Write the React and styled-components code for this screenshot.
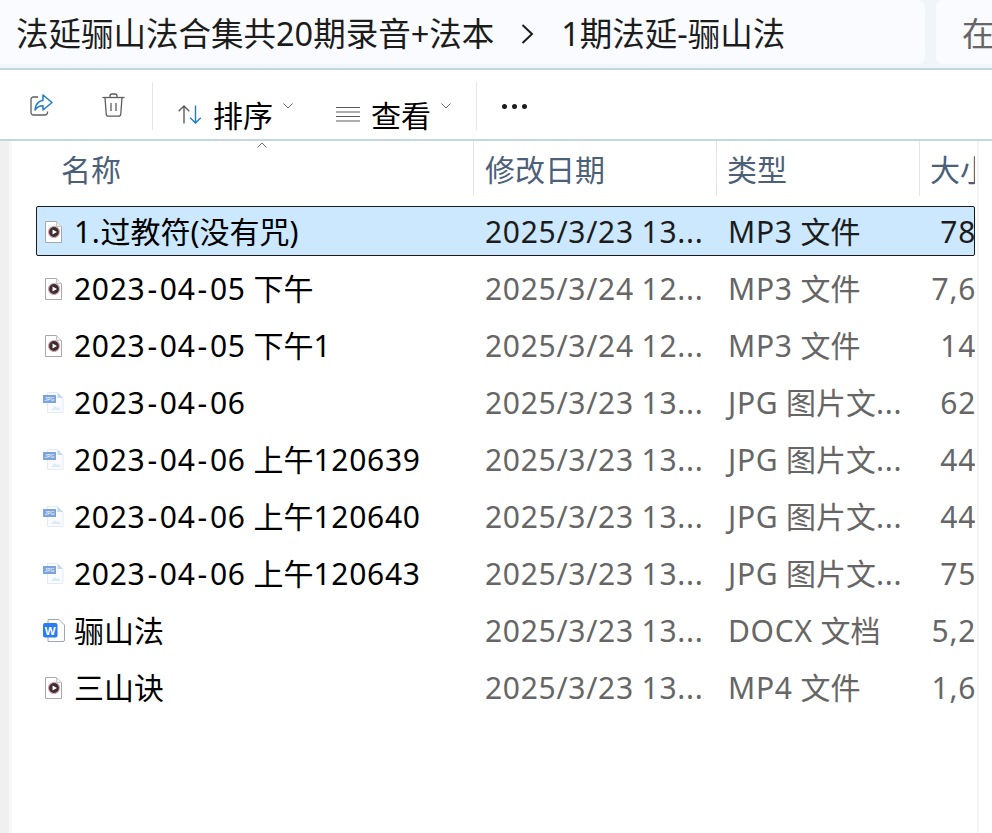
import React from "react"
import styled, { createGlobalStyle } from "styled-components"

const GlobalStyle = createGlobalStyle`
  html, body {
    margin: 0;
    background: #fff;
  }
  body {
    font-family: "Noto Sans", "Noto Sans CJK SC", sans-serif;
    overflow: hidden;
  }
`

const files = [
  { name: "1.过教符(没有咒)", date: "2025/3/23 13...", type: "MP3 文件", size: "78", icon: "media", selected: true },
  { name: "2023-04-05 下午", date: "2025/3/24 12...", type: "MP3 文件", size: "7,6", icon: "media" },
  { name: "2023-04-05 下午1", date: "2025/3/24 12...", type: "MP3 文件", size: "14", icon: "media" },
  { name: "2023-04-06", date: "2025/3/23 13...", type: "JPG 图片文...", size: "62", icon: "jpg" },
  { name: "2023-04-06 上午120639", date: "2025/3/23 13...", type: "JPG 图片文...", size: "44", icon: "jpg" },
  { name: "2023-04-06 上午120640", date: "2025/3/23 13...", type: "JPG 图片文...", size: "44", icon: "jpg" },
  { name: "2023-04-06 上午120643", date: "2025/3/23 13...", type: "JPG 图片文...", size: "75", icon: "jpg" },
  { name: "骊山法", date: "2025/3/23 13...", type: "DOCX 文档", size: "5,2", icon: "word" },
  { name: "三山诀", date: "2025/3/23 13...", type: "MP4 文件", size: "1,6", icon: "media" },
]

const MediaIcon = () => (
  <svg width="18" height="22" viewBox="0 0 18 22">
    <path d="M0.500 0.500h11l5 5v16h-16z" fill="#fff" stroke="#a8a8a8" />
    <path d="M11.500 0.500v5h5" fill="#efefef" stroke="#c4c4c4" />
    <circle cx="9" cy="11" r="5.500" fill="#3a2f2f" stroke="#d8a4b4" strokeWidth="1.200" />
    <path d="M7.500 8.500l4.500 2.500-4.500 2.500z" fill="#fff" />
  </svg>
)

const JpgIcon = () => (
  <svg width="21" height="21" viewBox="0 0 21 21">
    <path d="M4.500 0.500h10l5.500 5.500v14.500h-15.500z" fill="#f9fbff" stroke="#e2ebf7" />
    <path d="M14.500 0.500v5.500h5.500z" fill="#c6daf4" />
    <rect x="0" y="3" width="13" height="8" fill="#7ba3e0" />
    <text x="6.500" y="9" textAnchor="middle" fontFamily="Liberation Sans" fontSize="5" fill="#fff">JPG</text>
    <path d="M8 18l3.500-4 2.500 2 1.500-1 2.500 3z" fill="#dcebf8" />
  </svg>
)

const WordIcon = () => (
  <svg width="22" height="23" viewBox="0 0 22 23">
    <path d="M5 0.500h11l5.500 5.500v15a1.500 1.500 0 0 1-1.500 1.500H5z" fill="#fff" stroke="#9fa6b0" />
    <rect x="0" y="4" width="14.500" height="14.500" rx="2" fill="#2b7cf0" />
    <text x="7.200" y="15.500" textAnchor="middle" fontFamily="Liberation Sans" fontWeight="700" fontSize="11.500" fill="#fff">W</text>
  </svg>
)

const icons = { media: MediaIcon, jpg: JpgIcon, word: WordIcon }

const ShareIcon = () => (
  <svg width="23" height="22" viewBox="0 0 23 22" fill="none">
    <path d="M8 3H3.500A2.500 2.500 0 0 0 1 5.500V18.500A2.500 2.500 0 0 0 3.500 21H15A2.500 2.500 0 0 0 17.500 18.500V17.500" stroke="#5f5f5f" strokeWidth="1.300" />
    <path d="M13 1l9 7.500-9 7.500v-4.200c-3.500 0-6 1-8 4.200 .5-5.500 3.500-8.800 8-9.700z" fill="#fff" stroke="#1d7bc9" strokeWidth="1.500" strokeLinejoin="round" />
  </svg>
)

const TrashIcon = () => (
  <svg width="23" height="24" viewBox="0 0 23 24" fill="none" stroke="#5c5c5c" strokeWidth="1.300">
    <path d="M0.500 4.500h22" />
    <path d="M8 4.500V3a2 2 0 0 1 2-2h3a2 2 0 0 1 2 2v1.500" />
    <path d="M3 4.500l1.200 16.500a2.300 2.300 0 0 0 2.300 2.200h10a2.300 2.300 0 0 0 2.300-2.200L20 4.500" />
    <path d="M9 10v8M14 10v8" />
  </svg>
)

const SortIcon = () => (
  <svg width="24" height="19" viewBox="0 0 24 19" fill="none" strokeWidth="1.400">
    <path d="M6 18.500V1M0.700 6.300L6 1l5.300 5.300" stroke="#5c5c5c" />
    <path d="M17.500 0.500V18M12.200 12.700L17.500 18l5.300-5.300" stroke="#1d7bc9" />
  </svg>
)

const ViewIcon = () => (
  <svg width="24" height="16" viewBox="0 0 24 16" fill="none" stroke="#5c5c5c" strokeWidth="1.200">
    <path d="M0 1.500h24M0 6h24M0 10.500h24M0 15h24" />
  </svg>
)

const Caret = ({ up }) => (
  <svg width="10" height="6" viewBox="0 0 10 6" fill="none" stroke="#6a6a6a" strokeWidth="1">
    <path d={up ? "M0.500 5.500L5 1l4.500 4.500" : "M0.500 0.500L5 5l4.500-4.500"} />
  </svg>
)

// windows draws digits and dashes wider than the cjk font does
const Mixed = ({ text }) =>
  text.split(/([0-9A-Z/:,.\-]+)/).map((part, i) => {
    if (i % 2 === 0) return part
    return (
      <Latin key={i}>
        {part.split(/(-)/).map((bit, j) => (j % 2 ? <Dash key={j}>-</Dash> : bit))}
      </Latin>
    )
  })

const App = () => (
  <Page>
    <GlobalStyle />
    <AddressBar>
      <Breadcrumb>
        <Crumb>法延骊山法合集共20期录音+法本</Crumb>
        <Separator>
          <svg width="13" height="22" viewBox="0 0 13 22" fill="none" stroke="#1c1c1c" strokeWidth="2">
            <path d="M1.500 2l9.500 9-9.500 9" />
          </svg>
        </Separator>
        <Crumb>1期法延-骊山法</Crumb>
      </Breadcrumb>
      <SearchBox>在</SearchBox>
    </AddressBar>
    <Toolbar>
      <IconButton $pad={6}><ShareIcon /></IconButton>
      <IconButton $pad={0} $shift={-2}><TrashIcon /></IconButton>
      <ToolDivider />
      <MenuButton $width={158}>
        <MenuIcon><SortIcon /></MenuIcon>
        <MenuLabel>排序</MenuLabel>
        <MenuCaret><Caret /></MenuCaret>
      </MenuButton>
      <MenuButton $width={165}>
        <MenuIcon><ViewIcon /></MenuIcon>
        <MenuLabel>查看</MenuLabel>
        <MenuCaret><Caret /></MenuCaret>
      </MenuButton>
      <ToolDivider />
      <MoreButton>
        <Dot /><Dot /><Dot />
      </MoreButton>
    </Toolbar>
    <Content>
      <Gutter />
      <ListPane>
        <HeaderRow>
          <HeaderCell $pad={49} $divider>
            名称
            <SortMark><Caret up /></SortMark>
          </HeaderCell>
          <HeaderCell $pad={11} $divider>修改日期</HeaderCell>
          <HeaderCell $pad={10} $divider>类型</HeaderCell>
          <HeaderCell $pad={10}>大小</HeaderCell>
        </HeaderRow>
        <Rows>
          {files.map((file) => {
            const Icon = icons[file.icon]
            return (
              <Row key={file.name} $selected={file.selected}>
                <NameCell>
                  <IconSlot $kind={file.icon}><Icon /></IconSlot>
                  <span><Mixed text={file.name} /></span>
                </NameCell>
                <DateCell $selected={file.selected}><Mixed text={file.date} /></DateCell>
                <TypeCell $selected={file.selected}><Mixed text={file.type} /></TypeCell>
                <SizeCell $selected={file.selected}><Mixed text={file.size} /></SizeCell>
              </Row>
            )
          })}
        </Rows>
      </ListPane>
    </Content>
  </Page>
)

const Page = styled.div`
  width: 992px;
  height: 833px;
  display: flex;
  flex-direction: column;
  overflow: hidden;
  color: #000;
`

const AddressBar = styled.div`
  height: 68px;
  flex: none;
  display: flex;
  gap: 11px;
  background: #eff5f9;
  border-bottom: 2px solid #c6d6dd;
`

const Breadcrumb = styled.div`
  width: 925px;
  height: 64px;
  flex: none;
  display: flex;
  align-items: center;
  padding: 4px 0 0 16px;
  box-sizing: border-box;
  background: #f9fbfe;
  border-radius: 0 6px 6px 0;
`

const Crumb = styled.span`
  font-size: 32.5px;
  line-height: 60px;
  color: #1c1c1c;
  white-space: nowrap;
`

const Separator = styled.span`
  width: 67px;
  display: flex;
  justify-content: center;
`

const SearchBox = styled.div`
  flex: 1;
  height: 64px;
  display: flex;
  align-items: center;
  padding: 4px 0 0 26px;
  box-sizing: border-box;
  background: #f9fbfe;
  border-radius: 6px 0 0 6px;
  font-size: 32.5px;
  line-height: 60px;
  color: #666;
`

const Toolbar = styled.div`
  height: 69px;
  flex: none;
  display: flex;
  align-items: center;
  background: #fff;
  border-bottom: 2px solid #c6d6dd;
`

const IconButton = styled.div`
  width: 76px;
  height: 69px;
  padding-left: ${(p) => p.$pad}px;
  padding-right: ${(p) => (p.$shift ? -p.$shift : 0)}px;
  display: flex;
  align-items: center;
  justify-content: center;
  box-sizing: border-box;
`

const ToolDivider = styled.div`
  width: 1px;
  height: 48px;
  margin-top: 2px;
  background: #e6e6e6;
`

const MenuButton = styled.div`
  width: ${(p) => p.$width}px;
  height: 69px;
  display: flex;
  align-items: center;
  padding-left: 25px;
  box-sizing: border-box;
`

const MenuIcon = styled.span`
  display: flex;
  margin-top: 19px;
`

const MenuLabel = styled.span`
  font-size: 30px;
  margin: 22px 0 0 11px;
  line-height: 40px;
`

const MenuCaret = styled.span`
  display: flex;
  align-self: flex-start;
  margin: 33px 0 0 10px;
`

const MoreButton = styled.div`
  display: flex;
  gap: 5px;
  margin: 3px 0 0 25px;
`

const Dot = styled.i`
  display: block;
  width: 5px;
  height: 5px;
  border-radius: 50%;
  background: #1c1c1c;
`

const Content = styled.div`
  flex: 1;
  display: flex;
  min-height: 0;
`

const Gutter = styled.div`
  width: 9px;
  flex: none;
  background: #f0f0f0;
  border-right: 3px solid #f8f8f8;
`

const ListPane = styled.div`
  width: 965px;
  flex: none;
  border-right: 2px solid #f4f4f4;
`

const HeaderRow = styled.div`
  height: 55px;
  margin-right: 2px;
  display: grid;
  grid-template-columns: 462px 243px 203px 1fr;
  overflow: hidden;
`

const HeaderCell = styled.div`
  position: relative;
  display: flex;
  align-items: center;
  padding: 3px 0 0 ${(p) => p.$pad}px;
  border-right: ${(p) => (p.$divider ? "1px solid #e5e5e5" : "none")};
  font-size: 30px;
  line-height: 40px;
  color: #4c607a;
  white-space: nowrap;
  overflow: hidden;
`

const SortMark = styled.span`
  position: absolute;
  left: 245px;
  top: 1px;
  display: flex;
`

const Rows = styled.div`
  display: flex;
  flex-direction: column;
  margin: 10px 2px 0 24px;
`

const Row = styled.div`
  height: ${(p) => (p.$selected ? 50 : 57)}px;
  display: grid;
  grid-template-columns: 437px 243px 192px 1fr;
  align-items: center;
  box-sizing: border-box;
  padding-top: ${(p) => (p.$selected ? 1 : 0)}px;
  margin-bottom: ${(p) => (p.$selected ? 4 : 0)}px;
  background: ${(p) => (p.$selected ? "#cce8ff" : "transparent")};
  outline: ${(p) => (p.$selected ? "1px solid #1a1a1a" : "none")};
  outline-offset: -1px;
  border-radius: 2px;
  font-size: 30px;
  line-height: 40px;
  white-space: nowrap;
  overflow: hidden;
`

const Latin = styled.span`
  letter-spacing: 0.7px;
`

const Dash = styled.span`
  padding: 0 2px;
`

const NameCell = styled.div`
  display: flex;
  align-items: center;
  padding-left: 7px;
  color: #000;
`

const IconSlot = styled.span`
  width: 22px;
  margin-right: 9px;
  display: flex;
  flex: none;
  justify-content: ${(p) => (p.$kind === "media" ? "center" : "flex-start")};
`

const DateCell = styled.div`
  padding-left: 12px;
  color: ${(p) => (p.$selected ? "#1c1c1c" : "#666")};
`

const TypeCell = styled(DateCell)`
  overflow: hidden;
`

const SizeCell = styled.div`
  text-align: right;
  margin-right: -1px;
  color: ${(p) => (p.$selected ? "#1c1c1c" : "#666")};
`

export default App
